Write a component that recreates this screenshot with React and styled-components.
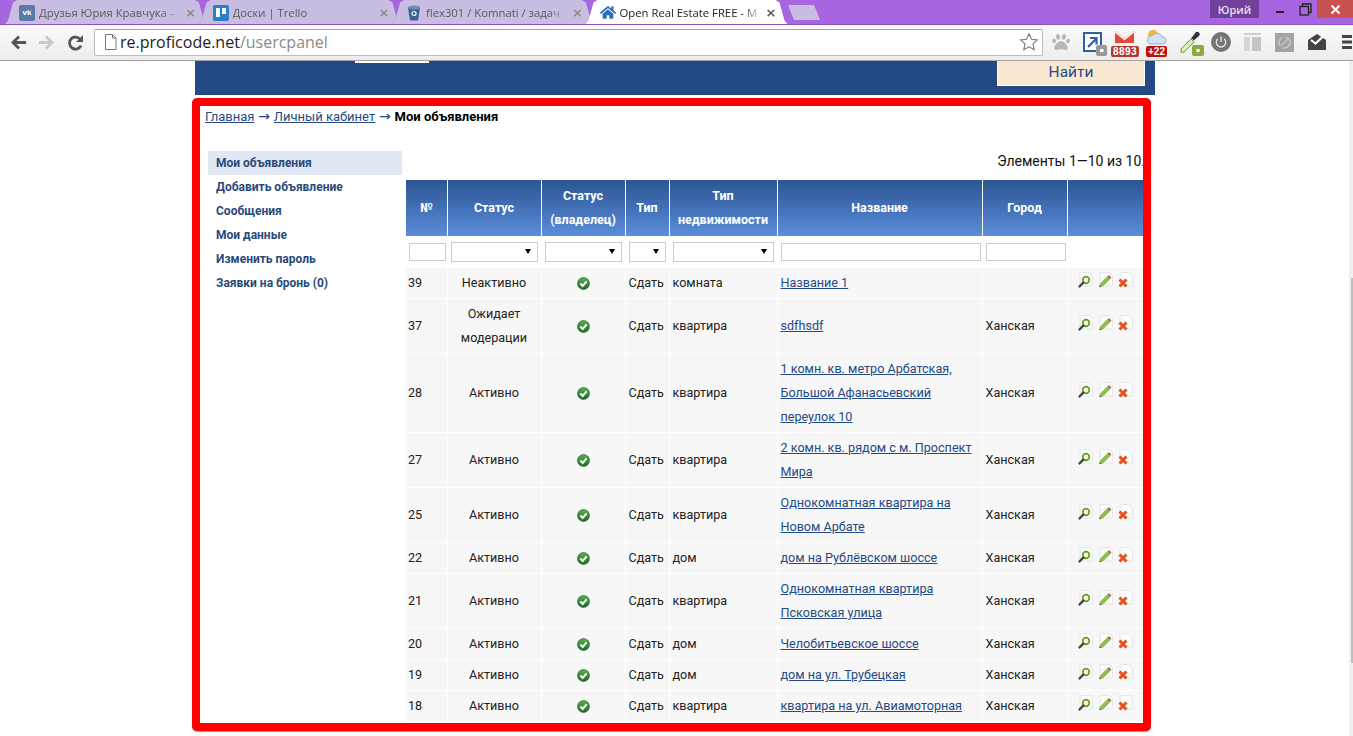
import React from "react";
import styled, { createGlobalStyle } from "styled-components";
import { FaHome, FaPaw } from "react-icons/fa";

const Global = createGlobalStyle`
  html, body { margin: 0; padding: 0; height: 100%; overflow: hidden; background: #fff; }
  * { box-sizing: border-box; }
`;

const Root = styled.div`
  width: 1353px;
  height: 736px;
  display: flex;
  flex-direction: column;
  font-family: Roboto, "Liberation Sans", sans-serif;
  overflow: hidden;
`;

/* browser chrome */
const TabStrip = styled.div`
  height: 25px;
  background: #a765e0;
  border-bottom: 1px solid #8a52bd;
  display: flex;
  align-items: flex-end;
  padding-left: 5px;
  flex: none;
`;

const TabShape = styled.div`
  width: 202px;
  height: 24px;
  margin-right: -8.5px;
  flex: none;
  position: relative;
  z-index: ${(p) => (p.$active ? 2 : 1)};
  filter: drop-shadow(0.6px 0 0 ${(p) => (p.$active ? "transparent" : "#8d76b8")});
`;

const TabBody = styled.div`
  height: 100%;
  padding: 1px 10px 0 14px;
  display: flex;
  align-items: center;
  font-family: "Open Sans", "Noto Sans", sans-serif;
  font-size: 11.3px;
  color: ${(p) => (p.$active ? "#222" : "#5a5a5a")};
  background: ${(p) => (p.$active ? "#fff" : "#c9bde2")};
  clip-path: polygon(0 100%, 3px 85%, 8px 10%, 12px 0, calc(100% - 12px) 0, calc(100% - 8px) 10%, calc(100% - 3px) 85%, 100% 100%);
`;

const Favicon = styled.span`
  width: 16px;
  height: 16px;
  flex: none;
  border-radius: 2px;
  display: flex;
  align-items: center;
  justify-content: center;
  margin-right: 4px;
  background: ${(p) => p.$bg || "transparent"};
  color: #fff;
  font-family: "Liberation Sans", sans-serif;
  font-size: 8px;
  font-weight: 700;
`;

const TabTitle = styled.span`
  flex: 1;
  min-width: 0;
  white-space: nowrap;
  overflow: hidden;
  -webkit-mask-image: linear-gradient(to right, #000 86%, transparent 100%);
  mask-image: linear-gradient(to right, #000 86%, transparent 100%);
`;

const TabClose = styled.span`
  width: 12px;
  flex: none;
  margin-left: 4px;
  color: ${(p) => (p.$active ? "#555" : "#8a8a8a")};
  font-family: "DejaVu Sans", sans-serif;
  font-size: 13px;
  font-weight: 700;
  line-height: 1;
`;

const NewTab = styled.div`
  width: 32px;
  height: 15px;
  margin: 0 0 4px 9px;
  flex: none;
  background: #c9bde2;
  clip-path: polygon(0 0, 26px 0, 32px 100%, 6px 100%);
`;

const WindowBox = styled.div`
  margin-left: auto;
  align-self: flex-start;
  display: flex;
  height: 18px;
`;

const UserBadge = styled.div`
  width: 49px;
  background: #713f9c;
  color: #e8e0ee;
  font-family: "Open Sans", sans-serif;
  font-size: 11px;
  font-weight: 600;
  display: flex;
  align-items: center;
  justify-content: center;
  margin-right: 8px;
`;

const WinButton = styled.div`
  width: ${(p) => p.$w}px;
  display: flex;
  align-items: center;
  justify-content: center;
  background: ${(p) => p.$bg || "transparent"};
`;

const Toolbar = styled.div`
  height: 36px;
  flex: none;
  display: flex;
  align-items: center;
  padding: 0 0 1px 10px;
  background: linear-gradient(#fafafa, #ededed);
  border-bottom: 1px solid #a3a3a3;
`;

const NavIcon = styled.svg`
  width: 17px;
  height: 17px;
  flex: none;
  margin-right: ${(p) => p.$mr}px;
`;

const Omnibox = styled.div`
  width: 949px;
  height: 27px;
  flex: none;
  display: flex;
  align-items: center;
  padding: 0 3px 0 9px;
  background: #fff;
  border: 1px solid #bdbdbd;
  border-top-color: #a9a9a9;
  border-radius: 2px;
  font-family: "Open Sans", "Noto Sans", sans-serif;
  font-size: 16px;
  color: #222;
`;

const Url = styled.span`
  margin-left: 3px;
  flex: 1;
  span { color: #8a8a8a; }
`;

const Ext = styled.div`
  position: relative;
  flex: none;
  width: ${(p) => p.$w}px;
  margin-left: ${(p) => p.$ml}px;
  height: 24px;
  display: flex;
  align-items: center;
`;

const ExtSvg = styled.svg`
  flex: none;
  margin-top: ${(p) => p.$mt || 0}px;
  margin-left: ${(p) => p.$ml || 0}px;
  overflow: visible;
`;

const CountBadge = styled.span`
  position: absolute;
  left: ${(p) => p.$left}px;
  bottom: -3px;
  height: 11px;
  padding: 0 2px;
  background: ${(p) => p.$bg};
  border-radius: 2px;
  color: #fff;
  font-family: "Liberation Sans", sans-serif;
  font-size: 10px;
  font-weight: 700;
  letter-spacing: ${(p) => p.$spacing || 0}px;
  line-height: 11px;
  white-space: nowrap;
`;

/* page */
const Page = styled.div`
  flex: 1;
  position: relative;
  overflow: hidden;
  background: #fff;
`;

const ScrollTrack = styled.div`
  position: absolute;
  top: 0;
  right: 0;
  bottom: 0;
  width: 4px;
  background: #f0f0f0;
`;

const ScrollThumb = styled.div`
  position: absolute;
  top: 217px;
  right: 0;
  width: 2px;
  height: 385px;
  background: #bdbdbd;
`;

const Wrapper = styled.div`
  width: 960px;
  margin-left: 195px;
`;

const SearchBand = styled.div`
  height: 34px;
  background: #234a85;
  display: flex;
  align-items: flex-start;
  padding: 0 10px 0 160px;
`;

const SearchField = styled.div`
  width: 74px;
  height: 2px;
  background: #fff;
`;

const FindButton = styled.div`
  width: 148px;
  height: 25px;
  margin-left: auto;
  background: #fbe8d3;
  border: 1px solid #fff;
  border-top: 0;
  color: #234a85;
  font-size: 15.5px;
  text-align: center;
  line-height: 22px;
`;

const RedBox = styled.div`
  width: 959px;
  height: 633px;
  margin: 3px 0 0 -3px;
  border: 8px solid #f00;
  border-radius: 5px;
  overflow: hidden;
  background: #fff;
  box-shadow: 0 1px 1px #999;
`;

const Breadcrumb = styled.div`
  height: 20px;
  padding: 1px 0 0 5px;
  font-size: 13px;
  line-height: 20px;
  color: #234a85;
  b { color: #000; font-weight: 700; }
`;

const Arrow = styled.span`
  font-family: "DejaVu Sans", sans-serif;
  font-size: 14px;
  line-height: 1;
  margin: 0 0.6px;
`;

const BlueLink = styled.a`
  color: #234a85;
  text-decoration: underline;
`;

const Content = styled.div`
  margin-top: 25px;
  display: flex;
`;

const Sidebar = styled.ul`
  list-style: none;
  margin: 0 4px 0 8px;
  padding: 0;
  width: 194px;
  flex: none;
`;

const SideItem = styled.li`
  height: 24px;
  padding-left: 8px;
  font-size: 12px;
  font-weight: 700;
  line-height: 24px;
  color: #2a4a7b;
  background: ${(p) => (p.$active ? "#e1e8f3" : "transparent")};
`;

const Main = styled.div`
  flex: 1;
  min-width: 0;
`;

const Summary = styled.div`
  height: 29px;
  margin-right: -2px;
  font-size: 14px;
  line-height: 21px;
  text-align: right;
  color: #111;
  white-space: nowrap;
`;

const Table = styled.table`
  width: 741px;
  table-layout: fixed;
  border-collapse: collapse;
  font-size: 12.6px;
  color: #222;
`;

const Col = styled.col`
  width: ${(p) => p.$w}px;
`;

const Th = styled.th`
  height: 56px;
  padding: 4px 2px;
  border-right: 1px solid #fff;
  background: linear-gradient(#2b5492, #5b8ddb);
  color: #fff;
  font-size: 12.5px;
  font-weight: 700;
  line-height: 24px;
  text-align: center;
`;

const FilterCell = styled.td`
  height: 32px;
  padding: 0 3px 0 ${(p) => (p.$first ? 3 : 4)}px;
  vertical-align: middle;
`;

const FilterInput = styled.input`
  display: block;
  width: ${(p) => p.$w}px;
  height: 18px;
  padding: 0;
  background: #fff;
  border: 1px solid #ccc;
  border-radius: 0;
  outline: none;
`;

const FilterSelect = styled.div`
  position: relative;
  height: 20px;
  background: #fff;
  border: 1px solid #ccc;
  &::after {
    content: "";
    position: absolute;
    right: 6px;
    top: 6px;
    border-style: solid;
    border-width: 5px 3px 0;
    border-color: #000 transparent transparent;
  }
`;

const Tr = styled.tr`
  background: #f7f7f7;
  border-bottom: 1px solid #fff;
`;

const Td = styled.td`
  padding: 3px;
  border-right: 1px solid #fff;
  line-height: 24px;
  text-align: ${(p) => (p.$center ? "center" : "left")};
  vertical-align: middle;
`;

const IdCell = styled(Td)`
  padding-left: 2px;
`;

const CheckWrap = styled.span`
  display: flex;
  justify-content: center;
`;

const Actions = styled.div`
  display: flex;
  gap: 3px;
  padding-left: 6px;
  margin-top: -6px;
`;

const ActionIcon = styled.svg`
  width: 17px;
  height: 17px;
  flex: none;
`;

const Check = () => (
  <svg width="13" height="13" viewBox="0 0 13 13">
    <defs>
      <linearGradient id="okGrad" x1="0" y1="0" x2="0" y2="1">
        <stop offset="0" stopColor="#5cae52" />
        <stop offset="1" stopColor="#1d6b24" />
      </linearGradient>
    </defs>
    <circle cx="6.5" cy="6.5" r="6" fill="url(#okGrad)" stroke="#1f5c25" strokeWidth="0.6" />
    <path d="M3.4 6.5l2.300 2.400 3.900-4.600" fill="none" stroke="#fff" strokeWidth="2" />
  </svg>
);

const Sheet = () => (
  <path d="M4.500 0.500h8l3 3v9a1.500 1.500 0 0 1-1.500 1.500h-9.500a1.500 1.500 0 0 1-1.500-1.500v-11a1.500 1.500 0 0 1 1.500-1.500z" fill="#fbfbfb" stroke="#e6e6e6" />
);

const ViewIcon = () => (
  <ActionIcon viewBox="0 0 17 17">
    <Sheet />
    <circle cx="9" cy="8" r="3.300" fill="#f3f8e4" stroke="#6d9a1f" strokeWidth="1.700" />
    <path d="M6.300 10.700L2.500 14.500" stroke="#444" strokeWidth="2.400" strokeLinecap="round" />
  </ActionIcon>
);

const EditIcon = () => (
  <ActionIcon viewBox="0 0 17 17">
    <Sheet />
    <path d="M2.500 15l1.200-3.600 7-7 2.400 2.400-7 7z" fill="#8fc14a" stroke="#6f9e33" strokeWidth="0.600" />
    <path d="M10.700 4.400l1.300-1.300 2.400 2.400-1.300 1.300z" fill="#b5603c" />
    <path d="M2.500 15l.6-1.800 1.200 1.200z" fill="#444" />
  </ActionIcon>
);

const DeleteIcon = () => (
  <ActionIcon viewBox="0 0 17 17">
    <Sheet />
    <path d="M2.500 7.500l7 7m0-7l-7 7" fill="none" stroke="#e2531f" strokeWidth="3" />
  </ActionIcon>
);

const rows = [
  { id: 39, status: "Неактивно", type: "комната", name: ["Название 1"], city: "" },
  { id: 37, status: ["Ожидает", "модерации"], type: "квартира", name: ["sdfhsdf"], city: "Ханская" },
  { id: 28, status: "Активно", type: "квартира", name: ["1 комн. кв. метро Арбатская,", "Большой Афанасьевский", "переулок 10"], city: "Ханская" },
  { id: 27, status: "Активно", type: "квартира", name: ["2 комн. кв. рядом с м. Проспект", "Мира"], city: "Ханская" },
  { id: 25, status: "Активно", type: "квартира", name: ["Однокомнатная квартира на", "Новом Арбате"], city: "Ханская" },
  { id: 22, status: "Активно", type: "дом", name: ["дом на Рублёвском шоссе"], city: "Ханская" },
  { id: 21, status: "Активно", type: "квартира", name: ["Однокомнатная квартира", "Псковская улица"], city: "Ханская" },
  { id: 20, status: "Активно", type: "дом", name: ["Челобитьевское шоссе"], city: "Ханская" },
  { id: 19, status: "Активно", type: "дом", name: ["дом на ул. Трубецкая"], city: "Ханская" },
  { id: 18, status: "Активно", type: "квартира", name: ["квартира на ул. Авиамоторная"], city: "Ханская" },
];

const Lines = ({ items }) =>
  items.map((line, i) => (
    <React.Fragment key={line}>
      {i > 0 && <br />}
      {line}
    </React.Fragment>
  ));

const colWidths = [41, 94, 84, 44, 108, 205, 85, 80];
const menu = ["Мои объявления", "Добавить объявление", "Сообщения", "Мои данные", "Изменить пароль", "Заявки на бронь (0)"];

const Tab = ({ icon, bg, title, active }) => (
  <TabShape $active={active}>
    <TabBody $active={active}>
      <Favicon $bg={bg}>{icon}</Favicon>
      <TabTitle>{title}</TabTitle>
      <TabClose $active={active}>×</TabClose>
    </TabBody>
  </TabShape>
);

const BrowserChrome = () => (
  <>
    <TabStrip>
      <Tab bg="#5b7aa8" icon="vk" title="Друзья Юрия Кравчука – " />
      <Tab
        bg="#2a7fc9"
        title="Доски | Trello"
        icon={
          <svg width="12" height="12" viewBox="0 0 12 12">
            <rect x="1" y="1" width="4" height="9" fill="#fff" />
            <rect x="7" y="1" width="4" height="6" fill="#fff" />
          </svg>
        }
      />
      <Tab
        title="flex301 / Komnati / задач"
        icon={
          <svg width="14" height="16" viewBox="0 0 14 16">
            <path d="M1 2.500h12l-1.800 12a1 1 0 0 1-1 1h-6.400a1 1 0 0 1-1-1z" fill="#3d5f92" />
            <ellipse cx="7" cy="2.500" rx="6" ry="2" fill="#6f8db8" />
            <circle cx="7" cy="8.500" r="2" fill="none" stroke="#fff" strokeWidth="1.200" />
          </svg>
        }
      />
      <Tab active title="Open Real Estate FREE - М" icon={<FaHome size={17} color="#2a6fb5" />} />
      <NewTab />
      <WindowBox>
        <UserBadge>Юрий</UserBadge>
        <WinButton $w={26}>
          <svg width="10" height="10" viewBox="0 0 10 10"><rect x="1" y="7" width="8" height="2" fill="#222" /></svg>
        </WinButton>
        <WinButton $w={24}>
          <svg width="13" height="13" viewBox="0 0 13 13" fill="none" stroke="#222" strokeWidth="1.300">
            <rect x="1" y="3.500" width="8.500" height="8.500" />
            <path d="M3.500 3V1h8.500v8.500h-2" />
          </svg>
        </WinButton>
        <WinButton $w={36} $bg="#c75050">
          <svg width="11" height="11" viewBox="0 0 11 11"><path d="M1.500 1.500l8 8m0-8l-8 8" stroke="#fff" strokeWidth="2" /></svg>
        </WinButton>
      </WindowBox>
    </TabStrip>
    <Toolbar>
      <NavIcon $mr={11} viewBox="0 0 17 17"><path d="M16 8.500H4M9 2.500L3 8.500l6 6" fill="none" stroke="#555" strokeWidth="2.800" /></NavIcon>
      <NavIcon $mr={12} viewBox="0 0 17 17"><path d="M1 8.500h12M8 2.500l6 6-6 6" fill="none" stroke="#c9c9c9" strokeWidth="2.800" /></NavIcon>
      <NavIcon $mr={10} viewBox="0 0 17 17">
        <path d="M14 11.500a6 6 0 1 1-.6-6" fill="none" stroke="#555" strokeWidth="2.800" />
        <path d="M16 1v7h-7z" fill="#555" />
      </NavIcon>
      <Omnibox>
        <svg width="13" height="16" viewBox="0 0 13 16">
          <path d="M1.500.5h7l3.500 3.500v11.500h-10.500z M8.500.5v3.500h3.500" fill="#fff" stroke="#777" />
        </svg>
        <Url>re.proficode.net<span>/usercpanel</span></Url>
        <svg width="20" height="20" viewBox="0 0 20 20">
          <path d="M10 1.800l2.500 5.400 5.800.7-4.300 4 1.200 5.800-5.200-2.900-5.200 2.900 1.200-5.800-4.300-4 5.800-.7z" fill="#fff" stroke="#777" strokeWidth="1.100" />
        </svg>
      </Omnibox>
      <Ext $w={18} $ml={9}><FaPaw size={18} color="#b7b7b7" /></Ext>
      <Ext $w={24} $ml={13}>
        <ExtSvg width="24" height="24" viewBox="0 0 24 24" $mt={3}>
          <rect x="1" y="1" width="17" height="18" fill="#fff" stroke="#2f5f9f" strokeWidth="2" />
          <path d="M5 15l8-8M7 6h6.500v6.500" fill="none" stroke="#2f5f9f" strokeWidth="2.200" />
          <rect x="13" y="13" width="11" height="11" rx="2" fill="#999" />
          <rect x="17" y="17" width="3.500" height="3" fill="#fff" />
        </ExtSvg>
      </Ext>
      <Ext $w={27} $ml={4}>
        <ExtSvg width="19" height="12" viewBox="0 0 19 12" $ml={4} $mt={-11}>
          <rect width="19" height="12" fill="#e04a3c" />
          <path d="M0 0l9.500 7.500 9.500-7.500" fill="#fdf5f4" />
          <path d="M0 1l9.500 7.500 9.500-7.500" fill="none" stroke="#fff" strokeWidth="1.200" />
        </ExtSvg>
        <CountBadge $left={0} $bg="#b23a30" $spacing={0.4}>8893</CountBadge>
      </Ext>
      <Ext $w={21} $ml={8}>
        <ExtSvg width="21" height="15" viewBox="0 0 21 15" $mt={-12}>
          <circle cx="7" cy="6" r="5" fill="#f2b632" />
          <path d="M5 15a4 4 0 0 1 1-8 5.500 5.500 0 0 1 10 1 3.500 3.500 0 0 1 1 7z" fill="#cfe3f5" stroke="#8db4d8" />
        </ExtSvg>
        <CountBadge $left={0} $bg="#c40f0f">+22</CountBadge>
      </Ext>
      <Ext $w={24} $ml={13}>
        <ExtSvg width="24" height="25" viewBox="0 0 24 25" $mt={3}>
          <path d="M1 18l10-10 3 3-10 10-3 .5z" fill="#dcefb4" stroke="#7a9a3a" />
          <path d="M11 7l2-2 2.500-3.500a2 2 0 0 1 3.500 3.500l-3 2.500-2 2z" fill="#333" />
          <rect x="12" y="14" width="12" height="11" rx="2" fill="#8eaa3c" />
          <rect x="16.500" y="18" width="3" height="3" fill="#fff" />
        </ExtSvg>
      </Ext>
      <Ext $w={20} $ml={7}>
        <svg width="20" height="20" viewBox="0 0 20 20">
          <circle cx="10" cy="10" r="10" fill="#757575" />
          <path d="M6.800 6.800a4.700 4.700 0 1 0 6.400 0M10 4.500v5.500" fill="none" stroke="#e5e5e5" strokeWidth="1.400" />
        </svg>
      </Ext>
      <Ext $w={17} $ml={13}>
        <svg width="17" height="18" viewBox="0 0 17 18">
          <rect x="0" y="0" width="17" height="2" fill="#cfcfcf" />
          <rect x="0" y="4" width="6" height="14" fill="#d6d6d6" />
          <rect x="8" y="4" width="9" height="14" fill="#c4c4c4" />
        </svg>
      </Ext>
      <Ext $w={19} $ml={14}>
        <svg width="19" height="19" viewBox="0 0 19 19">
          <rect width="19" height="19" fill="#a3a3a3" />
          <circle cx="9.500" cy="9.500" r="5.500" fill="none" stroke="#c7c7c7" strokeWidth="1.500" strokeDasharray="10 3" />
          <path d="M6 13l7-7" stroke="#c7c7c7" strokeWidth="1.500" />
        </svg>
      </Ext>
      <Ext $w={18} $ml={14}>
        <svg width="18" height="18" viewBox="0 0 18 18">
          <path d="M0 7l9-6 9 6v10h-18z" fill="#444" />
          <path d="M3 7l4.500 3.500 8-7.500" fill="none" stroke="#fff" strokeWidth="2.200" />
        </svg>
      </Ext>
      <Ext $w={10} $ml={16}>
        <svg width="10" height="14" viewBox="0 0 10 14">
          <path d="M0 0h10v3h-10zM0 5.500h10v3h-10zM0 11h10v3h-10z" fill="#444" />
        </svg>
      </Ext>
    </Toolbar>
  </>
);

export default function App() {
  return (
    <Root>
      <Global />
      <BrowserChrome />
      <Page>
        <Wrapper>
          <SearchBand>
            <SearchField />
            <FindButton>Найти</FindButton>
          </SearchBand>
          <RedBox>
            <Breadcrumb>
              <BlueLink href="#">Главная</BlueLink> <Arrow>→</Arrow> <BlueLink href="#">Личный кабинет</BlueLink> <Arrow>→</Arrow> <b>Мои объявления</b>
            </Breadcrumb>
            <Content>
              <Sidebar>
                {menu.map((item, i) => (
                  <SideItem key={item} $active={i === 0}>{item}</SideItem>
                ))}
              </Sidebar>
              <Main>
                <Summary>Элементы 1—10 из 10.</Summary>
                <Table>
                  <colgroup>
                    {colWidths.map((w, i) => <Col key={i} $w={w} />)}
                  </colgroup>
                  <thead>
                    <tr>
                      <Th>№</Th>
                      <Th>Статус</Th>
                      <Th>Статус<br />(владелец)</Th>
                      <Th>Тип</Th>
                      <Th>Тип<br />недвижимости</Th>
                      <Th>Название</Th>
                      <Th>Город</Th>
                      <Th />
                    </tr>
                    <tr>
                      <FilterCell $first><FilterInput $w={37} /></FilterCell>
                      <FilterCell><FilterSelect /></FilterCell>
                      <FilterCell><FilterSelect /></FilterCell>
                      <FilterCell><FilterSelect /></FilterCell>
                      <FilterCell><FilterSelect /></FilterCell>
                      <FilterCell><FilterInput $w={200} /></FilterCell>
                      <FilterCell><FilterInput $w={80} /></FilterCell>
                      <FilterCell />
                    </tr>
                  </thead>
                  <tbody>
                    {rows.map((row) => (
                      <Tr key={row.id}>
                        <IdCell>{row.id}</IdCell>
                        <Td $center>
                          {Array.isArray(row.status) ? <Lines items={row.status} /> : row.status}
                        </Td>
                        <Td $center><CheckWrap><Check /></CheckWrap></Td>
                        <Td>Сдать</Td>
                        <Td>{row.type}</Td>
                        <Td><BlueLink href="#"><Lines items={row.name} /></BlueLink></Td>
                        <Td>{row.city}</Td>
                        <Td>
                          <Actions>
                            <ViewIcon />
                            <EditIcon />
                            <DeleteIcon />
                          </Actions>
                        </Td>
                      </Tr>
                    ))}
                  </tbody>
                </Table>
              </Main>
            </Content>
          </RedBox>
        </Wrapper>
        <ScrollTrack>
          <ScrollThumb />
        </ScrollTrack>
      </Page>
    </Root>
  );
}
